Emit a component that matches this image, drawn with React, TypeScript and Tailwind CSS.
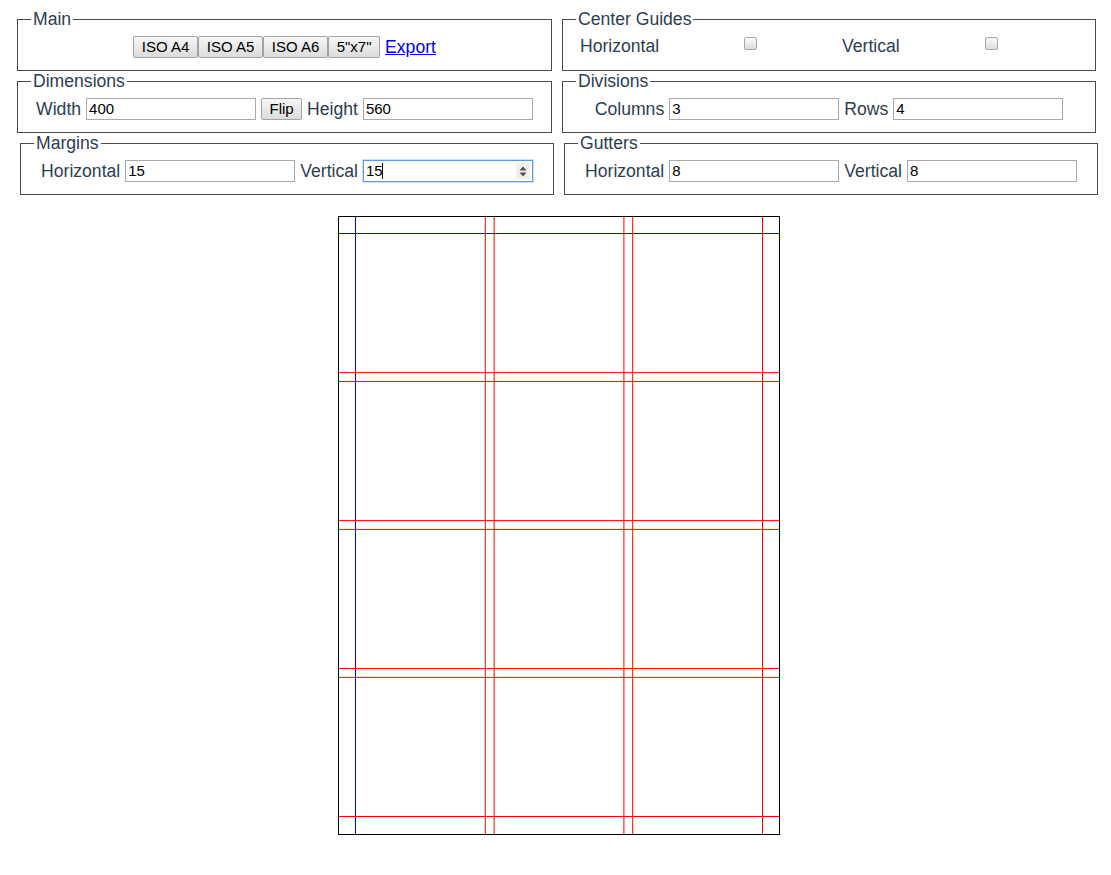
import React from 'react';

const W = 400;
const H = 560;
const S = 1.1;
const MARGIN_H = 15;
const MARGIN_V = 15;
const COLS = 3;
const ROWS = 4;
const GUT_H = 8;
const GUT_V = 8;

function Field({ legend, className, children }: { legend: string; className: string; children: React.ReactNode }) {
  return (
    <fieldset className={`border border-[#4a4a4a] px-[13px] pt-[6px] pb-[11px] ${className}`}>
      <legend className="px-[2px] text-[17.6px] leading-[20px] text-[#2c3e50]">{legend}</legend>
      {children}
    </fieldset>
  );
}

function Label({ children }: { children: React.ReactNode }) {
  return <span className="text-[17.6px] leading-[20px] text-[#2c3e50]">{children}</span>;
}

function TextInput({ value }: { value: string }) {
  return (
    <input
      readOnly
      value={value}
      className="w-[170px] h-[22px] border border-[#a9a9a9] bg-white px-[2px] text-[15px] text-black outline-none"
    />
  );
}

function Btn({ children, w }: { children: React.ReactNode; w: string }) {
  return (
    <button className={`${w} h-[22px] border border-[#a3a3a3] rounded-[2px] bg-linear-to-b from-[#f7f7f7] to-[#dcdcdc] text-[15px] leading-[18px] text-black`}>
      {children}
    </button>
  );
}

function Check() {
  return (
    <input
      type="checkbox"
      readOnly
      className="appearance-none self-start mt-[2px] w-[13px] h-[13px] rounded-[2px] border border-[#a8a8a8] bg-linear-to-b from-[#fbfbfb] to-[#dcdcdc]"
    />
  );
}

function Page() {
  const iw = W * S;
  const ih = H * S;
  const mx = MARGIN_H * S;
  const my = MARGIN_V * S;
  const colW = (W - 2 * MARGIN_H - (COLS - 1) * GUT_H) / COLS;
  const rowH = (H - 2 * MARGIN_V - (ROWS - 1) * GUT_V) / ROWS;

  const xs: number[] = [];
  for (let i = 0; i < COLS; i++) {
    const start = MARGIN_H + i * (colW + GUT_H);
    if (i > 0) xs.push(start * S);
    xs.push((start + colW) * S);
  }
  const ys: number[] = [];
  for (let i = 0; i < ROWS; i++) {
    const start = MARGIN_V + i * (rowH + GUT_V);
    if (i > 0) ys.push(start * S);
    ys.push((start + rowH) * S);
  }

  return (
    <div className="ml-[338px] mt-[21px] w-[442px] h-[619px] border border-black">
      <svg width={iw} height={617} className="block">
        <line x1={mx} y1={0} x2={mx} y2={617} stroke="#0000ff" strokeWidth={1} />
        <line x1={iw - mx} y1={0} x2={iw - mx} y2={617} stroke="#0000ff" strokeWidth={1} />
        <line x1={0} y1={my} x2={iw} y2={my} stroke="#0000ff" strokeWidth={1} />
        <line x1={0} y1={ih - my} x2={iw} y2={ih - my} stroke="#0000ff" strokeWidth={1} />
        {xs.map((x) => (
          <line key={`x${x}`} x1={x} y1={0} x2={x} y2={617} stroke="#ff0000" strokeWidth={1} />
        ))}
        {ys.map((y) => (
          <line key={`y${y}`} x1={0} y1={y} x2={iw} y2={y} stroke="#ff0000" strokeWidth={1} />
        ))}
      </svg>
    </div>
  );
}

export default function App() {
  return (
    <div className="min-h-[875px] bg-white pt-[9px] font-['Liberation_Sans',Arial,sans-serif]">
      {/* row 1 */}
      <div className="flex gap-[10px] ml-[17px]">
        <Field legend="Main" className="w-[535px]">
          <div className="h-[24px] flex items-center justify-center">
            <Btn w="w-[65px]">ISO A4</Btn>
            <Btn w="w-[65px]">ISO A5</Btn>
            <Btn w="w-[65px]">ISO A6</Btn>
            <Btn w="w-[52px]">5"x7"</Btn>
            <a href="#" className="ml-[5px] text-[17.6px] leading-[20px] text-[#0000ee] underline">Export</a>
          </div>
        </Field>
        <Field legend="Center Guides" className="w-[534px] pb-[10px]">
          <div className="h-[24px] flex items-center pl-[4px]">
            <span className="w-[164px]"><Label>Horizontal</Label></span>
            <Check />
            <span className="w-[85px]" />
            <span className="w-[143px]"><Label>Vertical</Label></span>
            <Check />
          </div>
        </Field>
      </div>

      {/* row 2 */}
      <div className="flex gap-[10px] ml-[17px]">
        <Field legend="Dimensions" className="w-[535px]">
          <div className="h-[24px] flex items-center justify-center gap-[5px]">
            <Label>Width</Label>
            <TextInput value="400" />
            <Btn w="w-[41px]">Flip</Btn>
            <Label>Height</Label>
            <TextInput value="560" />
          </div>
        </Field>
        <Field legend="Divisions" className="w-[534px]">
          <div className="h-[24px] flex items-center justify-center gap-[5px]">
            <Label>Columns</Label>
            <TextInput value="3" />
            <Label>Rows</Label>
            <TextInput value="4" />
          </div>
        </Field>
      </div>

      {/* row 3 */}
      <div className="flex gap-[10px] ml-[20px]">
        <Field legend="Margins" className="w-[534px] pb-[10px]">
          <div className="h-[24px] flex items-center justify-center gap-[5px]">
            <Label>Horizontal</Label>
            <TextInput value="15" />
            <Label>Vertical</Label>
            <div className="relative">
              <input
                readOnly
                value="15"
                className="block w-[170px] h-[22px] border border-[#5b9be6] shadow-[0_0_0_1px_#cfe0f7] bg-white px-[2px] text-[15px] text-black outline-none"
              />
              <span className="absolute left-[19px] top-[3px] w-[1px] h-[16px] bg-black" />
              <span className="absolute right-[3px] top-[3px] w-[14px] h-[16px] bg-[#f0f0f0] flex items-center justify-center">
                <svg width="8" height="11" viewBox="0 0 8 11">
                  <path d="M4 0.5 L7.5 4.5 L0.5 4.5 Z" fill="#505050" />
                  <path d="M0.5 6.5 L7.5 6.5 L4 10.5 Z" fill="#505050" />
                </svg>
              </span>
            </div>
          </div>
        </Field>
        <Field legend="Gutters" className="w-[534px] pb-[10px]">
          <div className="h-[24px] flex items-center justify-center gap-[5px]">
            <Label>Horizontal</Label>
            <TextInput value="8" />
            <Label>Vertical</Label>
            <TextInput value="8" />
          </div>
        </Field>
      </div>

      <Page />
    </div>
  );
}
